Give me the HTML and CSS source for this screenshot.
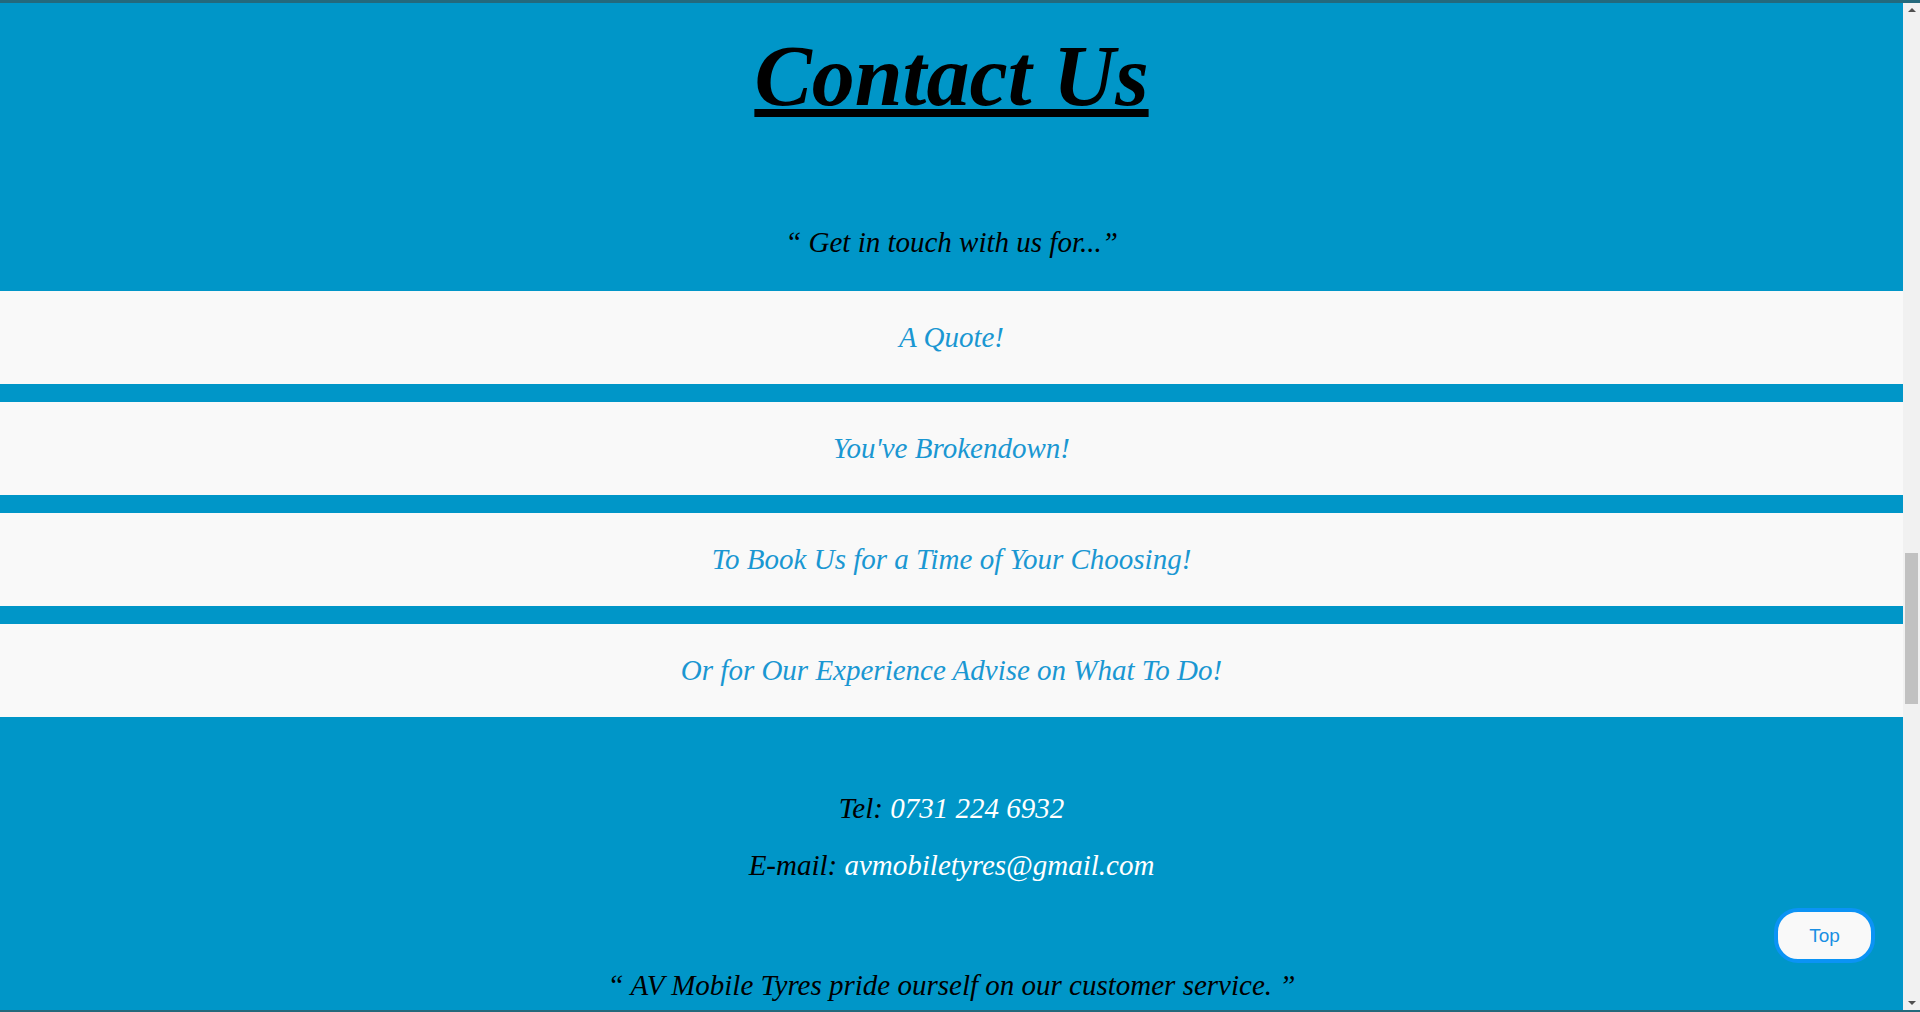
FILE: index.html
```html
<!DOCTYPE html>
<html lang="en">
<head>
<meta charset="utf-8">
<title>Contact Us - AV Mobile Tyres</title>
<link rel="stylesheet" href="styles.css">
</head>
<body>
<div class="frame">
  <main class="contact" id="contact">
    <h1 class="contact-title">Contact Us</h1>
    <p class="lead">“ Get in touch with us for...”</p>
    <ul class="reasons">
      <li class="reason">A Quote!</li>
      <li class="reason">You've Brokendown!</li>
      <li class="reason">To Book Us for a Time of Your Choosing!</li>
      <li class="reason">Or for Our Experience Advise on What To Do!</li>
    </ul>
    <div class="details">
      <p class="detail">Tel: <span class="detail-value">0731 224 6932</span></p>
      <p class="detail">E-mail: <span class="detail-value">avmobiletyres@gmail.com</span></p>
    </div>
    <p class="tagline">“ AV Mobile Tyres pride ourself on our customer service. ”</p>
    <a class="top-btn" href="#contact">Top</a>
  </main>
  <aside class="scrollbar" aria-hidden="true">
    <div class="scroll-btn"><span class="arrow-up"></span></div>
    <div class="scroll-track"><div class="scroll-thumb"></div></div>
    <div class="scroll-btn"><span class="arrow-down"></span></div>
  </aside>
</div>
</body>
</html>
```

FILE: styles.css
```css
html, body {
  margin: 0;
  padding: 0;
  height: 100%;
  overflow: hidden;
}
body {
  background: #0096c8;
  font-family: "Liberation Serif", "Times New Roman", serif;
}
.frame {
  box-sizing: border-box;
  height: 1012px;
  border-top: 3px solid #24697c;
  border-bottom: 2px solid #24697c;
  display: flex;
  overflow: hidden;
}
.contact {
  position: relative;
  flex: 1;
  min-width: 0;
  background: #0096c8;
  padding: 24px 0 0;
  text-align: center;
  color: #000;
}
.contact-title {
  margin: 0;
  font-size: 86px;
  line-height: 99px;
  font-weight: bold;
  font-style: italic;
  text-decoration: underline;
  text-decoration-thickness: 8px;
  text-underline-offset: 4px;
}
.lead {
  margin: 100px 0 0;
  font-size: 29px;
  line-height: 33px;
  font-style: italic;
}
.reasons {
  list-style: none;
  margin: 32px 0 0;
  padding: 0;
  display: flex;
  flex-direction: column;
  gap: 18px;
}
.reason {
  background: #f9f9f9;
  padding: 30px 0;
  font-size: 29px;
  line-height: 33px;
  font-style: italic;
  color: #1a97d2;
}
.details {
  margin-top: 75px;
  display: flex;
  flex-direction: column;
  gap: 24px;
}
.detail {
  margin: 0;
  font-size: 29px;
  line-height: 33px;
  font-style: italic;
}
.detail-value {
  color: #ffffff;
}
.tagline {
  margin: 87px 0 0;
  font-size: 29px;
  line-height: 33px;
  font-style: italic;
}
.top-btn {
  position: fixed;
  right: 45px;
  bottom: 49px;
  width: 93px;
  height: 47px;
  border: 4px solid #0b93f5;
  border-radius: 24px;
  background: #f9f9f9;
  color: #1a8fe3;
  font-family: "Liberation Sans", Arial, sans-serif;
  font-size: 19px;
  text-decoration: none;
  display: flex;
  align-items: center;
  justify-content: center;
}
.scrollbar {
  width: 17px;
  flex: 0 0 17px;
  background: #f1f1f1;
  display: flex;
  flex-direction: column;
}
.scroll-btn {
  height: 17px;
  display: flex;
  align-items: center;
  justify-content: center;
}
.arrow-up {
  width: 0;
  height: 0;
  border-left: 4px solid transparent;
  border-right: 4px solid transparent;
  border-bottom: 4px solid #505050;
  margin-top: -3px;
}
.arrow-down {
  width: 0;
  height: 0;
  border-left: 4px solid transparent;
  border-right: 4px solid transparent;
  border-top: 4px solid #505050;
  margin-top: 3px;
}
.scroll-track {
  flex: 1;
  padding: 533px 2px 0;
}
.scroll-thumb {
  height: 151px;
  background: #c1c1c1;
}
```
